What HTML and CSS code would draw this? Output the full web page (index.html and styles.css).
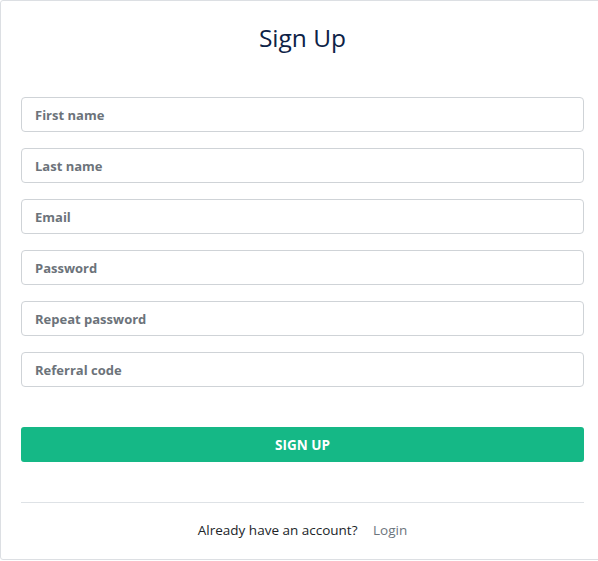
FILE: index.html
```html
<!DOCTYPE html>
<html lang="en">
<head>
<meta charset="utf-8">
<title>Sign Up</title>
<link rel="stylesheet" href="styles.css">
</head>
<body>
<div class="card">
  <h1 class="title">Sign Up</h1>
  <form class="form">
    <input class="field" type="text" placeholder="First name">
    <input class="field" type="text" placeholder="Last name">
    <input class="field" type="email" placeholder="Email">
    <input class="field" type="password" placeholder="Password">
    <input class="field" type="password" placeholder="Repeat password">
    <input class="field" type="text" placeholder="Referral code">
    <button class="submit" type="button">SIGN UP</button>
  </form>
  <hr class="divider">
  <p class="footer">Already have an account? <a class="login" href="#">Login</a></p>
</div>
</body>
</html>
```

FILE: styles.css
```css
html, body {
  margin: 0;
  padding: 0;
  background: #ffffff;
  overflow: hidden;
}
body {
  font-family: "Open Sans", "Noto Sans", sans-serif;
}
.card {
  box-sizing: border-box;
  width: 605px;
  height: 560px;
  border: 1px solid #dcdfe3;
  border-radius: 3px;
  padding: 21px 20px 0 20px;
  background: #fff;
}
.title {
  margin: 0 0 44px 0;
  text-align: center;
  font-size: 24.5px;
  line-height: 31px;
  font-weight: 500;
  color: #0d2246;
}
.form {
  display: flex;
  flex-direction: column;
  gap: 16px;
  margin: 0;
}
.field {
  box-sizing: border-box;
  width: 563px;
  height: 35px;
  border: 1px solid #cfd3d7;
  border-radius: 4px;
  padding: 0 13px;
  font-family: "Open Sans", "Noto Sans", sans-serif;
  font-size: 13px;
  font-weight: 700;
  color: #495057;
  outline: none;
}
.field::placeholder {
  color: #6c737a;
  opacity: 1;
}
.submit {
  box-sizing: border-box;
  margin-top: 24px;
  width: 563px;
  height: 35px;
  border: none;
  border-radius: 3px;
  background: #15b886;
  color: #fff;
  font-family: "Open Sans", "Noto Sans", sans-serif;
  font-size: 13.5px;
  font-weight: 700;
  letter-spacing: 0;
}
.divider {
  width: 563px;
  margin: 40px 0 0 0;
  border: none;
  border-top: 1px solid #dee2e6;
  height: 0;
}
.footer {
  margin: 17px 0 0 0;
  width: 563px;
  text-align: center;
  font-size: 13.5px;
  line-height: 21px;
  color: #212529;
}
.login {
  margin-left: 12px;
  color: #6c757d;
  text-decoration: none;
}
```
